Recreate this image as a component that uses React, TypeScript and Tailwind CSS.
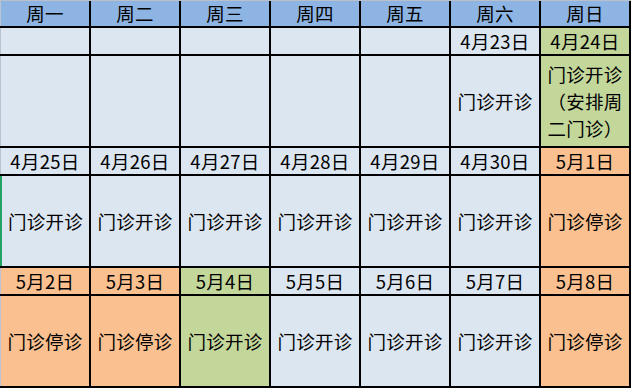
type Tone = "head" | "blue" | "green" | "orange";

type Cell = { text?: string; tone: Tone; lines?: string[] };

const toneClass: Record<Tone, string> = {
  head: "bg-[#8db4e2]",
  blue: "bg-[#dce6f1]",
  green: "bg-[#c4d79b]",
  orange: "bg-[#fac090]",
};

const open = "门诊开诊";
const closed = "门诊停诊";

const rows: Cell[][] = [
  ["周一", "周二", "周三", "周四", "周五", "周六", "周日"].map((d) => ({ text: d, tone: "head" })),
  [
    { tone: "blue" },
    { tone: "blue" },
    { tone: "blue" },
    { tone: "blue" },
    { tone: "blue" },
    { text: "4月23日", tone: "blue" },
    { text: "4月24日", tone: "green" },
  ],
  [
    { tone: "blue" },
    { tone: "blue" },
    { tone: "blue" },
    { tone: "blue" },
    { tone: "blue" },
    { text: open, tone: "blue" },
    { lines: ["门诊开诊", "（安排周", "二门诊）"], tone: "green" },
  ],
  [
    { text: "4月25日", tone: "blue" },
    { text: "4月26日", tone: "blue" },
    { text: "4月27日", tone: "blue" },
    { text: "4月28日", tone: "blue" },
    { text: "4月29日", tone: "blue" },
    { text: "4月30日", tone: "blue" },
    { text: "5月1日", tone: "orange" },
  ],
  [
    { text: open, tone: "blue" },
    { text: open, tone: "blue" },
    { text: open, tone: "blue" },
    { text: open, tone: "blue" },
    { text: open, tone: "blue" },
    { text: open, tone: "blue" },
    { text: closed, tone: "orange" },
  ],
  [
    { text: "5月2日", tone: "orange" },
    { text: "5月3日", tone: "orange" },
    { text: "5月4日", tone: "green" },
    { text: "5月5日", tone: "blue" },
    { text: "5月6日", tone: "blue" },
    { text: "5月7日", tone: "blue" },
    { text: "5月8日", tone: "orange" },
  ],
  [
    { text: closed, tone: "orange" },
    { text: closed, tone: "orange" },
    { text: open, tone: "green" },
    { text: open, tone: "blue" },
    { text: open, tone: "blue" },
    { text: open, tone: "blue" },
    { text: closed, tone: "orange" },
  ],
];

export default function App() {
  return (
    <div className="w-[631px] h-[388px] bg-white overflow-hidden font-['Noto_Sans_CJK_SC','Noto_Sans',sans-serif] text-[18.5px] text-black">
      <div className="border-t border-[#b8c0cc] bg-black grid grid-cols-[89px_repeat(6,88px)] grid-rows-[25px_26px_90px_26px_90px_26px_90px] gap-[2px] pr-[2px] pb-[2px]">
        {rows.map((row, r) =>
          row.map((cell, c) => (
            <div
              key={`${r}-${c}`}
              className={`${toneClass[cell.tone]} flex items-center justify-center text-center leading-none tracking-[0.3px] ${
                c === 0 ? (r === 4 ? "border-l-2 border-[#21a366]" : "border-l border-[#b8c4d4]") : ""
              }`}
            >
              {cell.lines ? (
                <div className="leading-[27px]">
                  {cell.lines.map((l) => (
                    <div key={l}>{l}</div>
                  ))}
                </div>
              ) : (
                cell.text
              )}
            </div>
          ))
        )}
      </div>
    </div>
  );
}
